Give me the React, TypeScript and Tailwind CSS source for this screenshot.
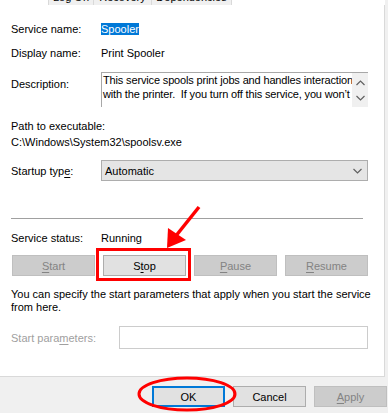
import React from "react";

type Btn = { label: string; key: string; rest: string; pre?: string; disabled?: boolean };

const serviceButtons: Btn[] = [
  { label: "Start", pre: "", key: "S", rest: "tart", disabled: true },
  { label: "Stop", pre: "S", key: "t", rest: "op" },
  { label: "Pause", pre: "", key: "P", rest: "ause", disabled: true },
  { label: "Resume", pre: "", key: "R", rest: "esume", disabled: true },
];

const Chevron: React.FC<{ up?: boolean }> = ({ up }) => (
  <svg width="9" height="6" viewBox="0 0 9 6" className="block">
    <polyline
      points={up ? "0.5,5 4.5,1 8.5,5" : "0.5,1 4.5,5 8.5,1"}
      fill="none"
      stroke="#606060"
      strokeWidth="1.2"
    />
  </svg>
);

const WinButton: React.FC<{ b: Btn; w: string; isDefault?: boolean }> = ({ b, w, isDefault }) => {
  const base = b.disabled
    ? "bg-[#cccccc] border border-[#bfbfbf] text-[#838383]"
    : isDefault
    ? "bg-[#e1e1e1] border-2 border-[#0078d7] text-black"
    : "bg-[#e1e1e1] border border-[#adadad] text-black";
  return (
    <div className={`${w} h-[21px] flex items-center justify-center leading-[16px] ${base}`}>
      <span>
        {b.pre}
        <span className="underline underline-offset-2">{b.key}</span>
        {b.rest}
      </span>
    </div>
  );
};

export default function App() {
  return (
    <div
      className="relative w-[388px] h-[413px] overflow-hidden bg-[#f0f0f0] text-[11px] text-black"
      style={{ fontFamily: '"Liberation Sans", Arial, sans-serif' }}
    >
      <div className="w-[385px]">
        {/* tab strip, only the bottom of the tabs is in view */}
        <div className="h-[5px] bg-white flex pl-[48px] overflow-hidden">
          {[
            ["Log On", "w-[46px]"],
            ["Recovery", "w-[58px]"],
            ["Dependencies", "w-[80px]"],
          ].map(([t, w], i) => (
            <div
              key={t}
              className={`${w} h-[5px] bg-[#f0f0f0] border-r border-[#d9d9d9] ${i === 0 ? "border-l" : ""} flex justify-center overflow-hidden`}
            >
              <span className="leading-[16px] mt-[-11px] whitespace-nowrap">{t}</span>
            </div>
          ))}
        </div>

        {/* General tab panel */}
        <div className="h-[372px] bg-white border-r border-b border-[#d9d9d9] pl-[11px] flex flex-col">
          <div className="mt-[16px] flex h-[16px] leading-[16px]">
            <span className="w-[90px]">Service name:</span>
            <span className="inline-block leading-[12px] bg-[#0078d7] text-white self-center">Spooler</span>
          </div>

          <div className="mt-[8px] flex h-[16px] leading-[16px]">
            <span className="w-[90px]">Display name:</span>
            <span>Print Spooler</span>
          </div>

          <div className="mt-[11px] flex items-start">
            <span className="w-[90px] mt-[4px] leading-[16px]">Description:</span>
            <div className="w-[267px] h-[35px] border-t border-l border-[#a8a8a8] flex">
              <div className="flex-1 pl-[1px] leading-[14px] overflow-hidden whitespace-nowrap tracking-[-0.15px]">
                <div>This service spools print jobs and handles interaction</div>
                <div>with the printer.&nbsp; If you turn off this service, you won&#8217;t</div>
              </div>
              <div className="w-[16px] bg-[#f0f0f0] flex flex-col items-center justify-between pt-[7px] pb-[6px]">
                <Chevron up />
                <Chevron />
              </div>
            </div>
          </div>

          <div className="mt-[11px] leading-[16px]">Path to executable:</div>
          <div className="leading-[16px]">C:\Windows\System32\spoolsv.exe</div>

          <div className="mt-[10px] flex items-center">
            <span className="w-[90px] leading-[16px]">
              Startup typ<span className="underline underline-offset-2">e</span>:
            </span>
            <div className="w-[267px] h-[21px] bg-[#e5e5e5] border border-[#adadad] flex items-center justify-between pl-[3px] pr-[5px] leading-[16px]">
              <span>Automatic</span>
              <Chevron />
            </div>
          </div>

          <div className="mt-[37px] w-[352px] h-px bg-[#a0a0a0]" />

          <div className="mt-[11px] flex h-[16px] leading-[16px]">
            <span className="w-[90px]">Service status:</span>
            <span>Running</span>
          </div>

          <div className="mt-[9px] ml-[1px] flex gap-[8px]">
            {serviceButtons.map((b) => (
              <WinButton key={b.label} b={b} w="w-[83px]" />
            ))}
          </div>

          <div className="mt-[12px] leading-[13px]">
            <div>You can specify the start parameters that apply when you start the service</div>
            <div>from here.</div>
          </div>

          <div className="mt-[12px] flex items-center">
            <span className="w-[108px] text-[#a0a0a0] leading-[16px]">
              Start para<span className="underline underline-offset-2">m</span>eters:
            </span>
            <div className="w-[249px] h-[23px] bg-white border border-[#cccccc]" />
          </div>
        </div>
      </div>

      {/* dialog buttons */}
      <div className="flex justify-end gap-[8px] pt-[9px] pr-[1px]">
        <WinButton b={{ label: "OK", key: "", pre: "OK", rest: "" }} w="w-[73px]" isDefault />
        <WinButton b={{ label: "Cancel", key: "", pre: "Cancel", rest: "" }} w="w-[73px]" />
        <WinButton b={{ label: "Apply", key: "A", pre: "", rest: "pply", disabled: true }} w="w-[73px]" />
      </div>

      {/* red annotations */}
      <div className="absolute left-[96px] top-[248px] w-[95px] h-[33px] border-[3px] border-[#ff0000]" />
      <svg className="absolute left-0 top-0 pointer-events-none" width="388" height="413">
        <line x1="199" y1="207" x2="175" y2="237" stroke="#ff0000" strokeWidth="3.5" />
        <polygon points="167,248 168,228 186,240" fill="#ff0000" />
        <ellipse cx="187" cy="394" rx="48" ry="16" fill="none" stroke="#ff0000" strokeWidth="3" />
      </svg>
    </div>
  );
}
